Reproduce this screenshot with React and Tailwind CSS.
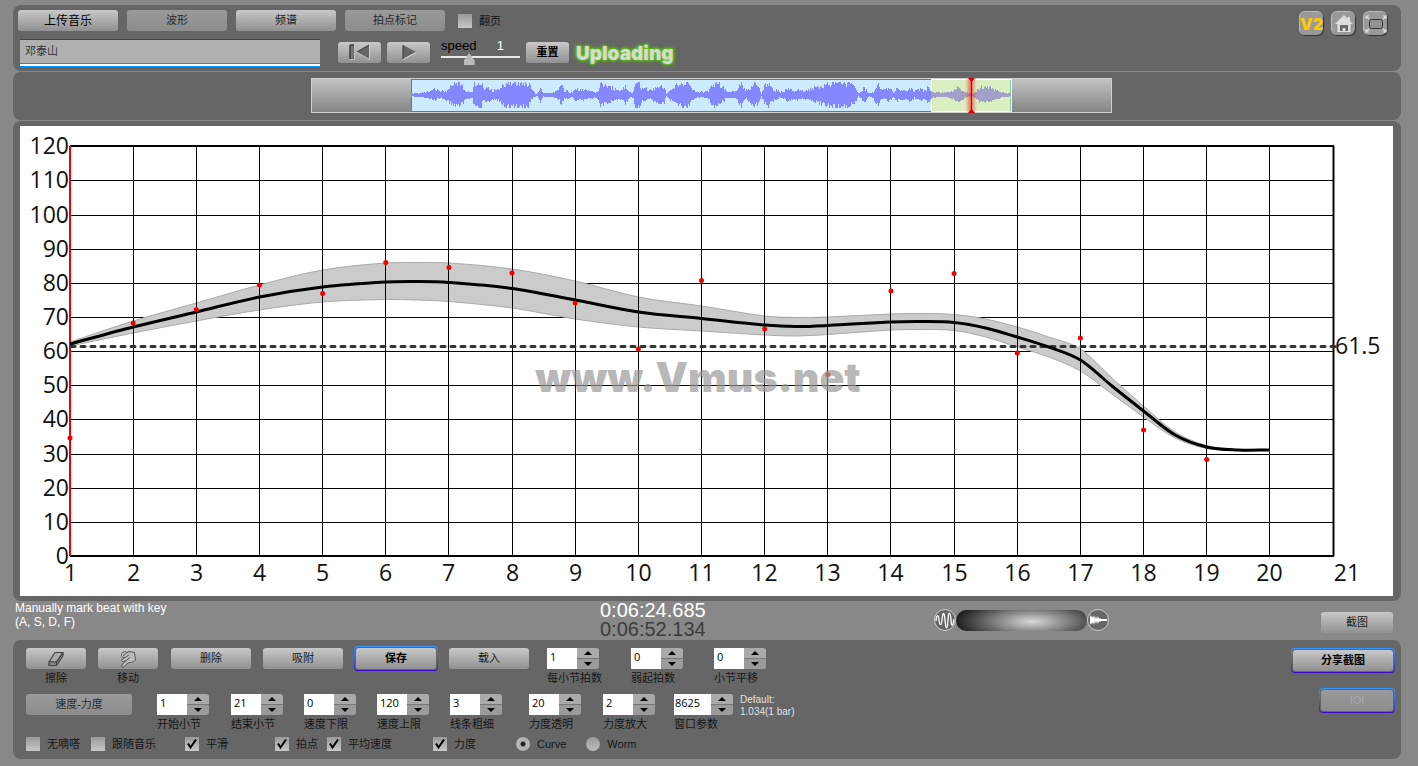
import { useId } from "react";
import clsx from "clsx";

const X0 = 50;
const X_STEP = 63.15;
const Y0 = 430;
const Y_STEP = 34.15;

// bar, tempo line, band top, band bottom (y in chart units)
const CURVE = [
  [1, 218, 216, 220],
  [2, 201, 195, 207],
  [3, 186, 177, 195],
  [4, 171, 159, 184],
  [5, 161, 144, 176],
  [6, 156, 137, 173.5],
  [6.5, 155.5, 136.5, 174],
  [7, 156.5, 137, 175.5],
  [8, 162.5, 143, 182],
  [9, 174, 155, 193],
  [10, 186, 171, 201],
  [11, 192.5, 180, 205],
  [12, 199, 190, 209],
  [12.5, 200.5, 191.5, 210],
  [13, 199.5, 191, 208.5],
  [14, 196, 188, 204],
  [14.5, 195.5, 187.5, 203.5],
  [15, 196.5, 188.5, 204.5],
  [15.5, 202, 193, 211],
  [16, 211, 201, 221],
  [16.5, 221, 211, 231],
  [17, 234, 223, 245],
  [17.5, 260, 252, 268],
  [18, 285, 280, 291],
  [18.5, 309, 306, 312],
  [19, 321, 319.5, 322.5],
  [19.5, 324, 324, 324],
  [20, 324, 324, 324],
];

const BEATS = [
  [1, 312], [2, 197], [3, 183.5], [4, 159], [5, 167.5], [6, 136.5], [7, 141.5],
  [8, 147], [9, 177], [10, 223], [11, 154.5], [12, 203], [13, 248.5], [14, 165],
  [15, 147.5], [16, 227], [17, 212], [18, 304], [19, 333.5],
];

// x, half height of the waveform
const ENVELOPE = [
  [0, 2], [9, 2], [14, 3], [19, 4], [25, 6], [29, 3], [35, 5], [39, 9], [45, 12], [50, 10],
  [55, 4], [61, 3], [63, 13], [70, 13], [72, 6], [76, 8], [81, 4], [87, 6], [92, 10], [97, 13],
  [114, 13], [118, 11], [121, 4], [125, 1], [127, 3], [129, 8], [132, 2], [139, 2], [144, 3],
  [147, 5], [150, 10], [153, 5], [157, 4], [161, 2], [164, 8], [167, 5], [173, 5], [179, 4],
  [184, 3], [187, 5], [189, 12], [195, 9], [201, 7], [207, 4], [211, 5], [214, 10], [217, 4],
  [220, 2], [222, 4], [224, 13], [228, 12], [231, 6], [234, 9], [237, 4], [240, 5], [244, 8],
  [249, 10], [253, 8], [255, 1], [258, 5], [263, 8], [269, 12], [277, 13], [280, 6], [285, 3],
  [292, 3], [297, 4], [300, 12], [307, 12], [311, 8], [316, 3], [322, 3], [326, 6], [330, 12],
  [334, 4], [339, 8], [344, 13], [347, 8], [350, 1], [353, 9], [356, 13], [359, 8], [364, 5],
  [369, 3], [376, 6], [382, 5], [389, 5], [395, 4], [401, 7], [409, 9], [415, 11], [421, 13],
  [427, 13], [433, 12], [439, 11], [444, 8], [447, 2], [449, 3], [453, 8], [457, 2], [462, 3],
  [466, 12], [469, 6], [473, 5], [477, 7], [482, 3], [486, 7], [490, 5], [495, 4], [500, 8],
  [503, 3], [507, 6], [512, 5], [517, 8], [521, 3], [529, 2], [536, 3], [541, 4], [547, 8],
  [553, 4], [557, 2], [561, 1], [565, 4], [569, 8], [574, 8], [580, 7], [585, 5], [589, 3],
  [593, 2], [597, 2], [600, 1],
];

const barX = (bar) => X0 + (bar - 1) * X_STEP;

// Smooth path through the points (Catmull-Rom turned into beziers)
const smooth = (points) => {
  const segments = [];
  for (let i = 0; i < points.length - 1; i++) {
    const p0 = points[i - 1] || points[i];
    const p1 = points[i];
    const p2 = points[i + 1];
    const p3 = points[i + 2] || p2;
    const h = (p2[0] - p1[0]) / 3;
    const s1 = (p2[1] - p0[1]) / (p2[0] - p0[0]);
    const s2 = (p3[1] - p1[1]) / (p3[0] - p1[0]);
    segments.push(`C${p1[0] + h} ${p1[1] + s1 * h} ${p2[0] - h} ${p2[1] - s2 * h} ${p2[0]} ${p2[1]}`);
  }
  return segments.join(" ");
};

const column = (index) => CURVE.map((row) => [barX(row[0]), row[index]]);

const linePath = `M${barX(1)} 218 ${smooth(column(1))}`;
const lowerBack = column(3).reverse();
const bandPath = `M${barX(1)} 216 ${smooth(column(2))} L${lowerBack[0].join(" ")} ${smooth(lowerBack)} Z`;

const noise = (n) => {
  const v = Math.sin(n * 12.9898 + n * n * 0.37) * 43758.5;
  return v - Math.floor(v);
};

const wavePath = (() => {
  let d = "";
  let k = 0;
  for (let x = 0; x < 600; x++) {
    while (k < ENVELOPE.length - 2 && ENVELOPE[k + 1][0] <= x) k++;
    const [xa, a] = ENVELOPE[k];
    const [xb, b] = ENVELOPE[k + 1];
    const level = a + ((b - a) * (x - xa)) / (xb - xa);
    const up = Math.min(13, Math.max(1, Math.round(level * (0.65 + 0.6 * noise(x + 1)))));
    const down = Math.min(13, Math.max(1, Math.round(level * (0.65 + 0.5 * noise(x + 901)))));
    d += `M${x + 0.5} ${16 - up}V${16 + down}`;
  }
  return d;
})();

const Button = ({ children, className, flat, ...props }) => (
  <button
    type="button"
    className={clsx(
      "flex h-[21px] shrink-0 items-center justify-center rounded-[3px] text-[11px] leading-none",
      flat
        ? "bg-linear-to-b from-[#9a9a9a] to-[#8c8c8c] text-[#2a2a2a]"
        : "bg-linear-to-b from-[#c9c9c9] to-[#919191] text-[#1c1c1c]",
      className
    )}
    {...props}
  >
    {children}
  </button>
);

const Ring = ({ children, className }) => (
  <div className={clsx("shrink-0 rounded-[4px] bg-linear-to-b from-[#3399ff] to-[#3a00cc] p-px", className)}>
    <div className="rounded-[3px] bg-[#666] p-px">{children}</div>
  </div>
);

const Check = ({ label, checked, className }) => (
  <label className={clsx("flex shrink-0 items-center gap-[7px] text-[11px] leading-[14px] text-[#161616]", className)}>
    <span className="grid size-[14px] *:[grid-area:1/1]">
      <input
        type="checkbox"
        defaultChecked={checked}
        className="peer size-[14px] appearance-none bg-linear-to-b from-[#999] to-[#c8c8c8]"
      />
      <svg viewBox="0 0 14 14" className="pointer-events-none invisible peer-checked:visible">
        <path d="M3 6.5 L5.5 10.5 L11 2.5" fill="none" stroke="#000" strokeWidth="2" />
      </svg>
    </span>
    {label}
  </label>
);

const Radio = ({ label, checked, className }) => (
  <label className={clsx("flex shrink-0 items-center gap-[7px] text-[11px] leading-[14px] text-[#161616]", className)}>
    <input
      type="radio"
      name="display"
      defaultChecked={checked}
      className="size-[14px] appearance-none rounded-full bg-linear-to-b from-[#999] to-[#bdbdbd] checked:bg-[radial-gradient(circle,#222_2px,#b4b4b4_3px)]"
    />
    {label}
  </label>
);

const Spinner = ({ label, value, wide, className }) => {
  const id = useId();
  return (
    <div className={clsx("flex w-[52px] shrink-0 flex-col", className)}>
      <div className="flex">
        <input
          id={id}
          defaultValue={value}
          className={clsx(
            "h-[21px] shrink-0 bg-white pb-1 font-['Open_Sans',sans-serif] text-[11px] leading-[16px] text-black outline-none",
            wide ? "w-[37px] pl-px" : "w-[30px] pl-[3px]"
          )}
        />
        <div className="flex w-[22px] shrink-0 flex-col gap-px overflow-hidden rounded-r-[3px] bg-[#777]">
          <button type="button" aria-label={`${label} +`} className="flex h-[10px] items-center justify-center bg-[#aaa]">
            <svg width="8" height="4" viewBox="0 0 8 4"><path d="M4 0 L8 4 H0 Z" /></svg>
          </button>
          <button type="button" aria-label={`${label} -`} className="flex h-[10px] items-center justify-center bg-[#9b9b9b]">
            <svg width="8" height="4" viewBox="0 0 8 4"><path d="M4 4 L8 0 H0 Z" /></svg>
          </button>
        </div>
      </div>
      <label htmlFor={id} className="pt-px text-[11px] leading-[16px] whitespace-nowrap text-[#161616]">
        {label}
      </label>
    </div>
  );
};

const IconButton = ({ label, children }) => (
  <button
    type="button"
    aria-label={label}
    className="flex size-6 items-center justify-center rounded-md border-t border-l border-[#bbb] bg-[#999] shadow-[1px_1px_0_#333]"
  >
    {children}
  </button>
);

const Header = () => (
  <header className="flex justify-between rounded-[8px] bg-[#666] pt-[5px] pr-[14px] pb-1 pl-[5px]">
    <div>
      <div className="flex items-center gap-[9px]">
        <Button className="w-[100px] text-[12px] text-black">上传音乐</Button>
        <Button flat className="w-[100px]">波形</Button>
        <Button className="w-[100px]">频谱</Button>
        <Button flat className="w-[100px]">拍点标记</Button>
        <Check label="翻页" className="pl-1" />
      </div>
      <div className="flex h-7 items-center mt-2 pl-0.5">
        <div className="border-b border-[#0094ff]">
          <div className="border-b-2 border-white">
            <input
              aria-label="曲目"
              defaultValue="邓泰山"
              className="block h-[25px] w-[300px] border-t border-b border-t-[#444] border-b-[#0094ff] bg-[#b0b0b0] pb-1 pl-[5px] text-[11px] text-[#333] outline-none"
            />
          </div>
        </div>
        <div className="flex items-center pb-0.5 pl-[18px]">
          <Button className="w-[43px]" aria-label="上一个">
            <svg width="22" height="16" viewBox="0 0 22 16">
              <path d="M1 1h4v14H1z" fill="#777" stroke="#555" />
              <path d="M20 1v14L8 8z" fill="#666" />
              <path d="M1 15V1h4M8 8l12-7" fill="none" stroke="#333" />
              <path d="M5.500 1v14.500H1M20.500 1v14.500L8 8.500" fill="none" stroke="#ddd" strokeWidth="0.700" />
            </svg>
          </Button>
          <Button className="ml-1.5 w-[43px]" aria-label="播放">
            <svg width="16" height="16" viewBox="0 0 16 16">
              <path d="M2 1v14L15 8z" fill="#666" />
              <path d="M2 15V1" stroke="#333" />
              <path d="M2 15.500L15 8.500" stroke="#ddd" />
            </svg>
          </Button>
          <div className="ml-[11px] w-[79px]">
            <label htmlFor="speed" className="flex justify-between pr-4 text-[13px] leading-[14px] text-black">
              speed <span className="text-white">1</span>
            </label>
            <input
              id="speed"
              type="range"
              min="0.5"
              max="2"
              step="0.01"
              defaultValue="1"
              className="block h-3 w-full appearance-none bg-[linear-gradient(#e8e8e8,#e8e8e8)] bg-size-[100%_2px] bg-position-[0_3px] bg-no-repeat [&::-webkit-slider-thumb]:h-3 [&::-webkit-slider-thumb]:w-[11px] [&::-webkit-slider-thumb]:appearance-none [&::-webkit-slider-thumb]:bg-[#bbb] [&::-webkit-slider-thumb]:[clip-path:polygon(50%_0,100%_65%,100%_100%,0_100%,0_65%)]"
            />
          </div>
          <Button className="ml-1.5 w-[43px] font-bold text-black">重置</Button>
        </div>
        <span className="pt-0.5 pl-[7px] font-[Inter,sans-serif] text-[19px] leading-5 font-black text-[#d8d8d8] [text-shadow:0_0_3px_#5fd00a,0_0_3px_#5fd00a,0_0_4px_#5fd00a]">
          Uploading
        </span>
      </div>
    </div>
    <div className="flex gap-2 pt-px">
      <IconButton label="V2">
        <span className="font-[Inter,sans-serif] text-[16px] leading-none font-black text-[#ffc800]">V2</span>
      </IconButton>
      <IconButton label="主页">
        <svg width="20" height="20" viewBox="0 0 20 20">
          <path d="M10 1L1 10h2.500v8h13v-8H19L16 7V3h-2.500v1.500z" fill="#ddd" />
          <path d="M6 17v-6h8v6h-2.500v-3h-3v3z" fill="#666" />
        </svg>
      </IconButton>
      <IconButton label="全屏">
        <svg width="22" height="20" viewBox="0 0 22 20" fill="none">
          <rect x="4.500" y="5.500" width="13" height="9" rx="2" fill="#909090" stroke="#333" />
          <path d="M1 5V2h3M1 2l3 3M18 2h3v3M21 2l-3 3M1 15v3h3M1 18l3-3M21 15v3h-3M21 18l-3-3" stroke="#ddd" strokeWidth="1.200" />
        </svg>
      </IconButton>
    </div>
  </header>
);

const Waveform = () => (
  <section className="flex justify-center rounded-[8px] bg-[#666] pt-1.5 pb-[7px] pl-[9px]">
    <div className="flex w-[801px] justify-center border border-[#d0d0d0] bg-linear-to-b from-[#c2c2c2] to-[#868686]">
      <svg width="601" height="33" viewBox="0 0 601 33" className="overflow-visible">
        <defs>
          <clipPath id="played"><rect x="0" y="0" width="520" height="33" /></clipPath>
          <clipPath id="selected"><rect x="520" y="0" width="81" height="33" /></clipPath>
          <linearGradient id="glow">
            <stop offset="0" stopColor="#f44" stopOpacity="0" />
            <stop offset="0.5" stopColor="#e00" stopOpacity="0.6" />
            <stop offset="1" stopColor="#f44" stopOpacity="0" />
          </linearGradient>
        </defs>
        <rect x="0.500" y="0.500" width="600" height="32" fill="#cdeaff" stroke="#0094ff" />
        <path d={wavePath} stroke="#8488ff" clipPath="url(#played)" />
        <rect x="520.500" y="0.500" width="80" height="32" fill="#dbeec2" stroke="#fff" />
        <path d="M599.500 1v31" stroke="#7ccfae" />
        <path d={wavePath} stroke="#a0a0c8" clipPath="url(#selected)" />
        <rect x="554" y="0" width="12" height="33" fill="url(#glow)" />
        <path d="M560.500 0v33" stroke="#d00000" />
        <path d="M557 -1h7l-3.500 4zM557 34h7l-3.500 -4z" fill="#d00000" />
      </svg>
    </div>
  </section>
);

const TempoChart = () => (
  <section className="rounded-[8px] bg-[#666] pt-[5px] pr-2 pb-[5px] pl-[7px]">
    <svg viewBox="0 0 1373 470" className="block h-auto w-full bg-white font-['Open_Sans',sans-serif] text-[23px]">
      {Array.from({ length: 13 }, (_, i) => {
        const y = Math.round(Y0 - i * Y_STEP);
        const edge = i === 0 || i === 12;
        return (
          <g key={i}>
            <path d={`M${X0} ${edge ? y : y + 0.5}H1314`} stroke="#000" strokeWidth={edge ? 2 : 1} />
            <text x="49" y={y + 8} textAnchor="end" fill="#111">{i * 10}</text>
          </g>
        );
      })}
      <path d={bandPath} fill="#cbcbcb" stroke="#aaa" />
      {Array.from({ length: 21 }, (_, i) => {
        const x = Math.floor(barX(i + 1)) + 0.5;
        return (
          <g key={i}>
            <path d={`M${x} 20V430`} stroke="#000" strokeWidth={i === 20 ? 2 : 1} />
            <text x={i === 20 ? 1327 : x} y="455" textAnchor="middle" fill="#111">{i + 1}</text>
          </g>
        );
      })}
      <path d="M50 20V430" stroke="#f00000" strokeWidth="2" />
      <path d="M51 220.500H1315" stroke="#333" strokeWidth="3" strokeDasharray="4 6" strokeLinecap="round" />
      <text x="1315" y="228" fill="#111">61.5</text>
      <path d={linePath} fill="none" stroke="#000" strokeWidth="3" />
      {BEATS.map(([bar, y]) => (
        <circle key={bar} cx={barX(bar)} cy={y} r="2.500" fill="#f00000" />
      ))}
      <text
        x="678"
        y="266"
        textAnchor="middle"
        fill="#999"
        fillOpacity="0.7"
        className="font-[Inter,sans-serif] text-[41px] font-black"
      >
        www.Vmus.net
      </text>
    </svg>
  </section>
);

const StatusBar = () => (
  <section className="flex h-[39px] items-start pr-2 pl-0.5 text-white">
    <p className="w-[585px] text-[12px] leading-[14px]">
      Manually mark beat with key
      <br />
      (A, S, D, F)
    </p>
    <div className="w-[334px] text-[20px] leading-[19px]">
      <p>0:06:24.685</p>
      <p className="text-[#3c3c3c]">0:06:52.134</p>
    </div>
    <div className="flex items-center pt-2">
      <svg width="22" height="22" viewBox="0 0 22 22">
        <circle cx="11" cy="11" r="10.500" fill="#666" stroke="#ccc" />
        <path
          d="M2 12C2.500 5 4.500 5 5 11S7.500 17 8 11S10 0 11 11S13.500 21 14 11S16.500 3 17 11S19 17 20 10"
          fill="none"
          stroke="#fff"
          strokeWidth="1.300"
        />
      </svg>
      <input
        type="range"
        aria-label="缩放"
        className="h-[21px] w-[131px] appearance-none rounded-full bg-[radial-gradient(ellipse_75px_22px_at_58%_55%,#d8d8d8,#888_45%,#222)] [&::-webkit-slider-thumb]:appearance-none"
      />
      <svg width="22" height="22" viewBox="0 0 22 22">
        <circle cx="11" cy="11" r="10.500" fill="#666" stroke="#ccc" />
        <path
          d="M3 5l1 3 1-1 1 2 1-3 1 4 1-3 1 3 1-3 1 3 1-1 1 1h6v2h-6l-1 1-1-1-1 3-1-3-1 3-1-3-1 4-1-3-1 2-1-1-1 2z"
          fill="#fff"
        />
      </svg>
    </div>
    <Button className="mt-[11px] ml-auto w-[72px]">截图</Button>
  </section>
);

const Controls = () => (
  <section className="flex justify-between rounded-[8px] bg-[#666] pt-[7px] pr-1.5 pb-2 pl-[13px]">
    <div>
      <div className="flex h-[47px] items-start pt-px">
        <div className="flex w-[60px] shrink-0 flex-col items-center">
          <Button className="w-[60px]" aria-label="擦除">
            <svg width="18" height="16" viewBox="0 0 18 16" fill="#aaa" stroke="#444" strokeWidth="1.200" strokeLinejoin="round">
              <path d="M8 1.500h8L9.500 11H2z" />
              <path d="M2 11v3.500h7.500V11zM9.500 14.500L16 5V1.500L9.500 11z" fill="#888" />
            </svg>
          </Button>
          <span className="pt-px text-[11px] leading-[16px] text-[#161616]">擦除</span>
        </div>
        <div className="ml-3 flex w-[60px] shrink-0 flex-col items-center">
          <Button className="w-[60px]" aria-label="移动">
            <svg width="18" height="18" viewBox="0 0 18 18" fill="#bbb" stroke="#555" strokeLinejoin="round">
              <path d="M3 3.500C4 1.500 6.500 1 8 2.500L10 1.500L15.500 2.500L16.500 10C14.500 13 11 12 9 13L4.500 17C3 17.500 2 16.500 3 15L7 10.500L4.500 11.500C2.500 12 2 10 3.500 9L6 7.500C3 8 1.500 6 3 3.500z" />
              <path d="M4 5.500C6 5 7 3.500 8 2.500M6 7.500L10 5M7 10.500L11 7.500" fill="none" />
            </svg>
          </Button>
          <span className="pt-px text-[11px] leading-[16px] text-[#161616]">移动</span>
        </div>
        <Button className="ml-[13px] w-[80px]">删除</Button>
        <Button className="ml-3 w-[80px]">吸附</Button>
        <Ring className="-mt-0.5 ml-[11px]">
          <Button className="w-[80px] font-bold text-black">保存</Button>
        </Ring>
        <Button className="ml-[11px] w-[80px]">载入</Button>
        <Spinner label="每小节拍数" value="1" className="ml-[18px]" />
        <Spinner label="弱起拍数" value="0" className="ml-8" />
        <Spinner label="小节平移" value="0" className="ml-[31px]" />
      </div>
      <div className="flex h-[43px] items-start">
        <Button flat className="w-[106px]">速度-力度</Button>
        <Spinner label="开始小节" value="1" className="ml-[25px]" />
        <Spinner label="结束小节" value="21" className="ml-[22px]" />
        <Spinner label="速度下限" value="0" className="ml-[21px]" />
        <Spinner label="速度上限" value="120" className="ml-[21px]" />
        <Spinner label="线条粗细" value="3" className="ml-[21px]" />
        <Spinner label="力度透明" value="20" className="ml-[27px]" />
        <Spinner label="力度放大" value="2" className="ml-[22px]" />
        <Spinner label="窗口参数" value="8625" wide className="ml-[19px]" />
        <p className="ml-3.5 text-[10px] leading-3 text-[#e0e0e0]">
          Default:
          <br />
          1.034(1 bar)
        </p>
      </div>
      <div className="flex items-center">
        <Check label="无嘀嗒" />
        <Check label="跟随音乐" className="ml-[11px]" />
        <Check label="平滑" checked className="ml-[29px]" />
        <Check label="拍点" checked className="ml-[47px]" />
        <Check label="平均速度" checked className="ml-[9px]" />
        <Check label="力度" checked className="ml-[41px]" />
        <Radio label="Curve" checked className="ml-10" />
        <Radio label="Worm" className="ml-5" />
      </div>
    </div>
    <div className="flex flex-col items-end gap-[15px] pt-px">
      <Ring>
        <Button className="w-[100px] font-bold text-black">分享截图</Button>
      </Ring>
      <Ring>
        <Button flat disabled className="w-[72px] text-[#aaa]">IOI</Button>
      </Ring>
    </div>
  </section>
);

export default function App() {
  return (
    <main className="flex min-h-screen flex-col bg-[#888] pt-[5px] pr-[17px] pl-[13px] font-['Liberation_Sans','Noto_Sans_CJK_SC',sans-serif]">
      <div className="flex flex-col gap-px">
        <Header />
        <Waveform />
        <TempoChart />
      </div>
      <StatusBar />
      <Controls />
    </main>
  );
}
